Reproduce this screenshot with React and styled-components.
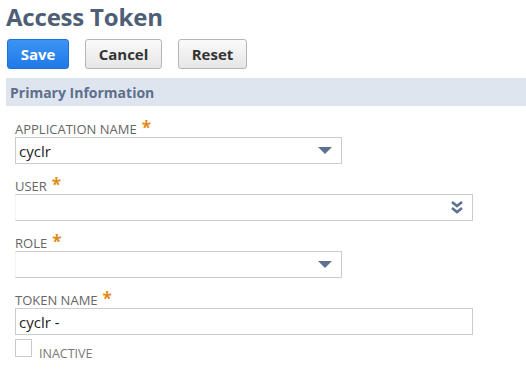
import styled, { createGlobalStyle } from 'styled-components'

const GlobalStyle = createGlobalStyle`
  html, body { margin: 0; padding: 0; background: #fff; }
  body { font-family: "Open Sans", "DejaVu Sans", sans-serif; }
`

const Page = styled.div`
  width: 526px;
  height: 380px;
  overflow: hidden;
  box-sizing: border-box;
  padding: 0 0 0 6px;
`

const Title = styled.h1`
  margin: 0;
  font-size: 24px;
  line-height: 33px;
  font-weight: 700;
  color: #4d5e76;
  letter-spacing: -0.2px;
`

const Toolbar = styled.div`
  display: flex;
  gap: 16px;
  margin-top: 6px;
  padding-left: 1px;
`

const Button = styled.button`
  box-sizing: border-box;
  height: 30px;
  width: ${p => p.$w}px;
  border-radius: 3px;
  font-family: inherit;
  font-size: 15px;
  font-weight: 700;
  padding: 0;
  cursor: pointer;
  color: ${p => (p.$primary ? '#fff' : '#333')};
  border: 1px solid ${p => (p.$primary ? '#1d6fd6' : '#b5b5b5')};
  background: ${p =>
    p.$primary
      ? 'linear-gradient(#3d93f5, #1f7ae8)'
      : 'linear-gradient(#fafafa, #e6e6e6)'};
`

const SectionBar = styled.div`
  margin-top: 9px;
  height: 28px;
  background: #dfe5ee;
  display: flex;
  align-items: center;
  padding-left: 4px;
  font-size: 14px;
  font-weight: 700;
  color: #5c6f8c;
`

const Form = styled.div`
  padding: 13px 0 0 9px;
  display: flex;
  flex-direction: column;
`

const Field = styled.div`
  display: flex;
  flex-direction: column;
  margin-bottom: 12px;
`

const Label = styled.div`
  font-size: 13px;
  line-height: 17px;
  color: #666;
  height: 17px;
  margin-bottom: 1px;
  span {
    color: #e08a17;
    font-size: 17px;
    font-weight: 700;
    margin-left: 5px;
    position: relative;
    top: 0;
  }
`

const Box = styled.div`
  box-sizing: border-box;
  width: ${p => p.$w}px;
  height: 27px;
  border: 1px solid #cccccc;
  border-left-color: ${p => (p.$faint ? '#f3f3f3' : '#cccccc')};
  display: flex;
  align-items: center;
  justify-content: space-between;
  padding: 0 9px 0 3px;
  font-size: 15px;
  color: #222;
  background: #fff;
`

const Check = styled.div`
  display: flex;
  align-items: flex-end;
  gap: 7px;
  margin-top: -8px;
  font-size: 12.5px;
  color: #777;
`

const CheckSquare = styled.div`
  box-sizing: border-box;
  width: 17px;
  height: 18px;
  border: 1px solid #c8c8c8;
  background: #fff;
`

const CheckLabel = styled.span`
  line-height: 12px;
  position: relative;
  top: 3px;
`

const Caret = () => (
  <svg width="14" height="8" viewBox="0 0 14 8">
    <path d="M0 0 H14 L7 7 Z" fill="#5c7191" />
  </svg>
)

const DoubleChevron = () => (
  <svg width="12" height="13" viewBox="0 0 12 13">
    <path d="M1 1 L6 5 L11 1" stroke="#5c7191" strokeWidth="2.6" fill="none" />
    <path d="M1 7 L6 11 L11 7" stroke="#5c7191" strokeWidth="2.6" fill="none" />
  </svg>
)

export default function App() {
  return (
    <Page>
      <GlobalStyle />
      <Title>Access Token</Title>
      <Toolbar>
        <Button $primary $w={62}>Save</Button>
        <Button $w={77}>Cancel</Button>
        <Button $w={69}>Reset</Button>
      </Toolbar>
      <SectionBar>Primary Information</SectionBar>
      <Form>
        <Field>
          <Label>APPLICATION NAME<span>*</span></Label>
          <Box $w={327}>cyclr<Caret /></Box>
        </Field>
        <Field>
          <Label>USER<span>*</span></Label>
          <Box $w={458} $faint><span /><DoubleChevron /></Box>
        </Field>
        <Field>
          <Label>ROLE<span>*</span></Label>
          <Box $w={327} $faint><span /><Caret /></Box>
        </Field>
        <Field>
          <Label>TOKEN NAME<span>*</span></Label>
          <Box $w={458}>cyclr -</Box>
        </Field>
        <Check>
          <CheckSquare />
          <CheckLabel>INACTIVE</CheckLabel>
        </Check>
      </Form>
    </Page>
  )
}
